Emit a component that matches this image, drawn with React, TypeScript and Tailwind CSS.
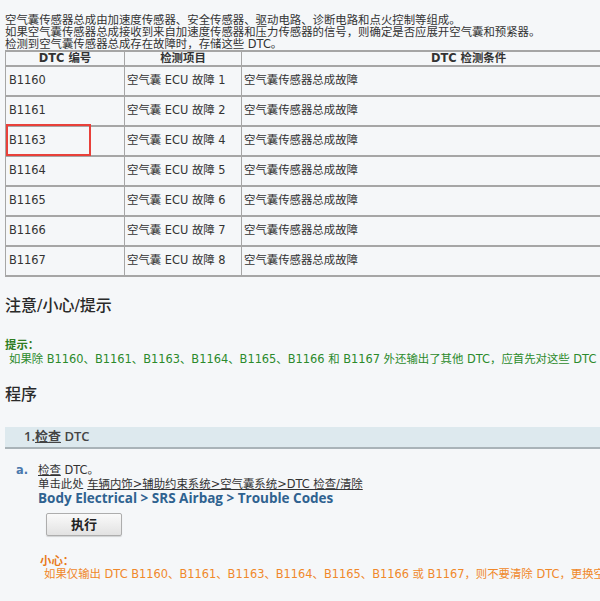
import React from 'react';

const rows = [
  { code: 'B1160', item: '空气囊 ECU 故障 1' },
  { code: 'B1161', item: '空气囊 ECU 故障 2' },
  { code: 'B1163', item: '空气囊 ECU 故障 4', marked: true },
  { code: 'B1164', item: '空气囊 ECU 故障 5' },
  { code: 'B1165', item: '空气囊 ECU 故障 6' },
  { code: 'B1166', item: '空气囊 ECU 故障 7' },
  { code: 'B1167', item: '空气囊 ECU 故障 8' },
];

const App = () => {
  return (
    <div className="w-[600px] h-[601px] overflow-hidden bg-[#f5f7f9] text-[11.4px] text-[#333] font-['DejaVu_Sans','Noto_Sans_CJK_SC',sans-serif]">
      {/* Intro */}
      <div className="pt-[14px] pl-[5px] leading-[12px] whitespace-nowrap">
        <p>空气囊传感器总成由加速度传感器、安全传感器、驱动电路、诊断电路和点火控制等组成。</p>
        <p>如果空气囊传感器总成接收到来自加速度传感器和压力传感器的信号，则确定是否应展开空气囊和预紧器。</p>
        <p>检测到空气囊传感器总成存在故障时，存储这些 DTC。</p>
      </div>

      {/* DTC table */}
      <div className="ml-[5px] w-[690px] border-t-2 border-l border-[#a6a6a6]">
        <div className="flex h-[15px] border-b-2 border-[#a6a6a6] font-bold leading-[13px]">
          <div className="w-[118px] text-center">DTC 编号</div>
          <div className="w-[117px] border-l border-[#a6a6a6] text-center">检测项目</div>
          <div className="flex-1 border-l border-[#a6a6a6] text-center">DTC 检测条件</div>
        </div>
        {rows.map((row) => (
          <div key={row.code} className="flex h-[30px] border-b-2 border-[#a6a6a6]">
            <div className="relative w-[118px] flex items-center px-[3px]">
              {row.code}
              {row.marked && (
                <span className="absolute left-[0px] top-[-3px] w-[85px] h-[32px] border-2 border-[#e8403a]" />
              )}
            </div>
            <div className="w-[117px] border-l border-[#a6a6a6] flex items-center px-[2px] whitespace-nowrap">
              {row.item}
            </div>
            <div className="flex-1 border-l border-[#a6a6a6] flex items-center px-[2px]">
              空气囊传感器总成故障
            </div>
          </div>
        ))}
      </div>

      {/* Notes */}
      <h2 className="mt-[19px] pl-[5px] text-[16px] leading-[20px] font-medium text-[#2a2a2a]">注意/小心/提示</h2>
      <div className="mt-[22px] leading-[14px] whitespace-nowrap text-[#2b8a2b]">
        <p className="pl-[5px] font-bold text-[#2f7d1f]">提示：</p>
        <p className="pl-[9px]">
          如果除 B1160、B1161、B1163、B1164、B1165、B1166 和 B1167 外还输出了其他 DTC，应首先对这些 DTC 进行故障排除。
        </p>
      </div>

      {/* Procedure */}
      <h2 className="mt-[19px] pl-[5px] text-[16px] leading-[20px] font-medium text-[#2a2a2a]">程序</h2>
      <div className="mt-[22px] ml-[5px] h-[22px] bg-[#dde9ee] border-b-2 border-[#a9b3b8] pl-[19px] flex items-center text-[13px] font-semibold text-[#444] font-['Open_Sans','Noto_Sans_CJK_SC',sans-serif]">
        1.<span className="underline">检查</span>&nbsp;DTC
      </div>

      <div className="mt-[14px] flex leading-[14px]">
        <span className="w-[38px] pl-[16px] font-bold text-[#4a78ad]">a.</span>
        <div className="whitespace-nowrap">
          <p>
            <span className="underline">检查</span> DTC。
          </p>
          <p>
            单击此处 <span className="underline">车辆内饰&gt;辅助约束系统&gt;空气囊系统&gt;DTC 检查/清除</span>
          </p>
          <p className="text-[13.5px] font-bold text-[#2f6290] font-['Open_Sans',sans-serif]">
            Body Electrical &gt; SRS Airbag &gt; Trouble Codes
          </p>
        </div>
      </div>

      <button className="mt-[8px] ml-[46px] w-[76px] h-[23px] rounded-[2px] border border-[#adadad] bg-gradient-to-b from-[#fafafa] to-[#e2e2e2] text-[13px] font-bold text-[#222] shadow-[0_1px_1px_rgba(0,0,0,0.15)]">
        执行
      </button>

      <div className="mt-[19px] leading-[13px] whitespace-nowrap text-[#f0882a]">
        <p className="pl-[40px] font-bold text-[#e87a1a]">小心：</p>
        <p className="pl-[44px]">
          如果仅输出 DTC B1160、B1161、B1163、B1164、B1165、B1166 或 B1167，则不要清除 DTC，更换空气囊传感器总成。
        </p>
      </div>
    </div>
  );
};

export default App;
